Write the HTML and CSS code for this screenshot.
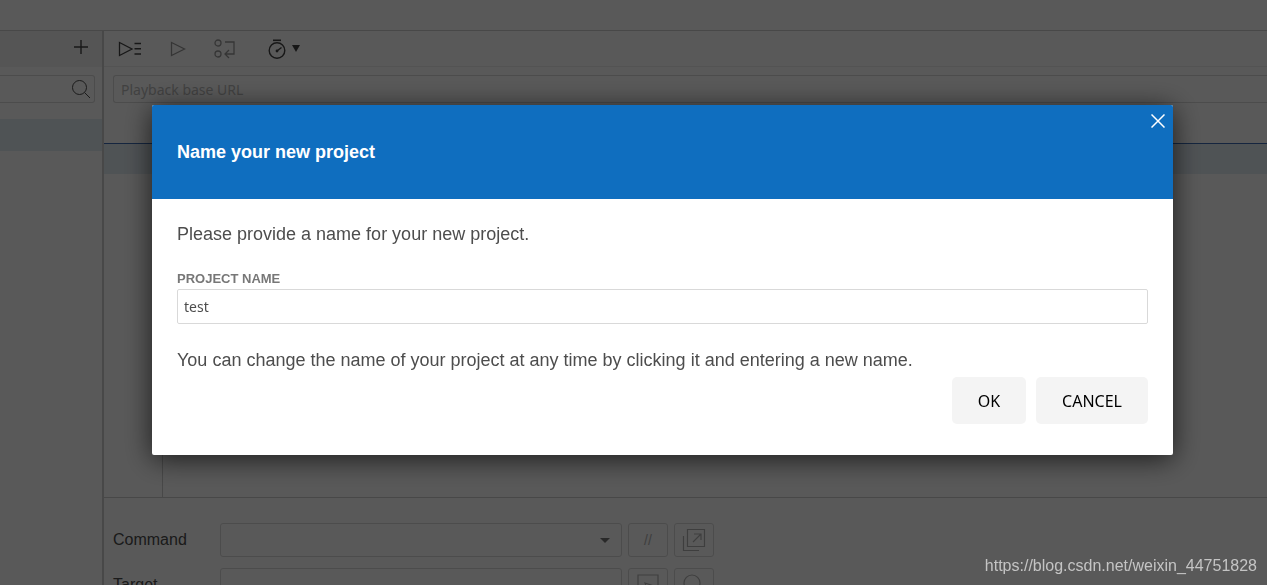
FILE: index.html
```html
<!DOCTYPE html>
<html lang="en">
<head>
<meta charset="utf-8">
<title>Name your new project</title>
<link rel="stylesheet" href="styles.css">
</head>
<body>
<div class="app">
  <header class="app-header"></header>
  <div class="app-body">
    <aside class="sidebar">
      <div class="sidebar-tools">
        <button class="icon-button" aria-label="Add test">
          <svg width="14" height="14" viewBox="0 0 14 14"><path stroke-width="1.4" d="M7 0V14M0 7H14"/></svg>
        </button>
      </div>
      <div class="search">
        <input class="search-input" type="text" aria-label="Search tests">
        <svg class="search-icon" width="20" height="20" viewBox="0 0 20 20"><circle cx="8.5" cy="8.5" r="7"/><path d="M13.5 13.5L19 19"/></svg>
      </div>
      <div class="test-item"></div>
    </aside>
    <main class="editor">
      <div class="toolbar">
        <button class="icon-button" aria-label="Run all tests">
          <svg width="24" height="16" viewBox="0 0 24 16"><path stroke-width="1.3" d="M1.5 1.5V14.5L14 8Z"/><path stroke-width="1.5" d="M16.5 2.5H23M16.5 7.8H23M16.5 13H23"/></svg>
        </button>
        <button class="icon-button faded" aria-label="Run current test">
          <svg width="16" height="16" viewBox="0 0 16 16"><path stroke-width="1.3" d="M1.5 1.5V14.5L14.5 8Z"/></svg>
        </button>
        <button class="icon-button faded" aria-label="Step over">
          <svg width="22" height="20" viewBox="0 0 22 20"><g stroke-width="1.3"><circle cx="4" cy="4" r="3"/><circle cx="4" cy="15" r="3"/><path d="M11 3H20V15H11M15 11L11 15L15 19"/></g></svg>
        </button>
        <button class="icon-button speed" aria-label="Test execution speed">
          <svg width="18" height="20" viewBox="0 0 18 20"><circle stroke-width="1.4" cx="9" cy="11.5" r="7.8"/><path stroke-width="1.5" d="M9 12L13.5 8.5"/><circle class="solid" cx="9" cy="12" r="1.4"/><path stroke-width="1.6" d="M5 1.3H13"/></svg>
          <svg width="8" height="8" viewBox="0 0 8 8"><path class="solid" d="M0 0H8L4 7Z"/></svg>
        </button>
      </div>
      <div class="url-bar"><input class="url-input" type="text" placeholder="Playback base URL" aria-label="Playback base URL"></div>
      <section class="commands">
        <div class="commands-head"></div>
        <div class="command-row"></div>
        <div class="command-gutter"></div>
      </section>
      <form class="command-form">
        <div class="form-row">
          <label for="command">Command</label>
          <div class="select-wrap">
            <select id="command" class="field"><option></option></select>
            <svg class="select-arrow" width="10" height="6" viewBox="0 0 10 6"><path class="solid" d="M0 0H10L5 5Z"/></svg>
          </div>
          <button type="button" class="square-button" aria-label="Disable command">//</button>
          <button type="button" class="square-button" aria-label="Open in new window">
            <svg width="24" height="24" viewBox="0 0 24 24"><path stroke-width="1.2" d="M5.5 1.5H22.5V18.5H5.5ZM1.5 8V22.5H17M11 14L18.5 6.5M12 6H19V12"/></svg>
          </button>
        </div>
        <div class="form-row">
          <label for="target">Target</label>
          <input id="target" class="field" type="text">
          <button type="button" class="square-button" aria-label="Select target in page">
            <svg width="24" height="24" viewBox="0 0 24 24"><path stroke-width="1.2" d="M2 18V2H22V18M9 10L18 13L14 15L12 19Z"/></svg>
          </button>
          <button type="button" class="square-button" aria-label="Find target in page">
            <svg width="24" height="24" viewBox="0 0 24 24"><circle stroke-width="1.2" cx="10" cy="10" r="8"/><path d="M16 16L22 22"/></svg>
          </button>
        </div>
      </form>
    </main>
  </div>
</div>
<div class="overlay">
  <div class="dialog" role="dialog" aria-labelledby="dialog-title">
    <div class="dialog-header">
      <h1 id="dialog-title" class="dialog-title">Name your new project</h1>
      <button class="close-button" aria-label="Close">
        <svg width="14" height="14" viewBox="0 0 14 14"><path stroke-width="1.5" d="M0.5 0.5L13.5 13.5M13.5 0.5L0.5 13.5"/></svg>
      </button>
    </div>
    <form class="dialog-body">
      <p class="dialog-text">Please provide a name for your new project.</p>
      <label class="name-label" for="project-name">PROJECT NAME</label>
      <input class="name-input" id="project-name" type="text" value="test">
      <p class="dialog-text">You can change the name of your project at any time by clicking it and entering a new name.</p>
      <div class="dialog-actions">
        <button type="button" class="action-button">OK</button>
        <button type="button" class="action-button">CANCEL</button>
      </div>
    </form>
  </div>
</div>
<div class="watermark">https://blog.csdn.net/weixin_44751828</div>
</body>
</html>
```
FILE: styles.css
```css
* { box-sizing: border-box; }

body {
  margin: 0;
  color: #4d4d4d;
  font-family: "Liberation Sans", Arial, sans-serif;
}

button, input, select { font: inherit; color: inherit; }
button { padding: 0; border: 0; background: none; }
p, h1 { margin: 0; }

svg { display: block; fill: none; stroke: currentColor; }
.solid { fill: currentColor; stroke: none; }

.app {
  display: flex;
  flex-direction: column;
  height: 100vh;
  overflow: hidden;
  background: #fff;
}
.app-header { flex: none; height: 31px; border-bottom: 1px solid #cecece; }
.app-body { flex: 1; display: flex; min-height: 0; }

.sidebar { flex: none; width: 104px; border-right: 2px solid #cecece; }
.sidebar-tools {
  display: flex;
  align-items: center;
  justify-content: flex-end;
  height: 36px;
  padding: 0 14px 4px 0;
  background: #f3f3f3;
}
.icon-button { color: #444; }
.faded { color: #999; }
.search { position: relative; padding: 8px 7px 0 0; }
.search-input {
  display: block;
  width: 100%;
  height: 28px;
  border: 1px solid #d9d9d9;
  border-left: 0;
  border-radius: 0 3px 3px 0;
}
.search-icon { position: absolute; right: 11px; top: 12px; }
.test-item { height: 32px; margin-top: 16px; background: #e3edf4; }

.editor { flex: 1; display: flex; flex-direction: column; min-width: 0; }
.toolbar {
  flex: none;
  display: flex;
  align-items: center;
  gap: 28px;
  height: 36px;
  padding-left: 14px;
  border-bottom: 1px solid #eee;
}
.speed { display: flex; align-items: center; gap: 6px; margin-left: 4px; }
.url-bar { flex: none; padding: 8px 0 0 9px; }
.url-input {
  display: block;
  width: 100%;
  height: 28px;
  padding: 0 7px;
  border: 1px solid #d9d9d9;
  border-right: 0;
  border-radius: 3px 0 0 3px;
  font-family: "Noto Sans", sans-serif;
  font-size: 14px;
}
.url-input::placeholder { color: #bbb; opacity: 1; }

.commands { flex: 1; display: flex; flex-direction: column; min-height: 0; }
.commands-head { height: 41px; border-bottom: 1px solid #3c6cb4; }
.command-row { height: 30px; background: #e3edf4; }
.command-gutter { flex: 1; width: 59px; border-right: 1px solid #cecece; }

.command-form {
  flex: none;
  display: flex;
  flex-direction: column;
  gap: 11px;
  height: 88px;
  padding: 25px 0 0 9px;
  border-top: 1px solid #cecece;
  overflow: hidden;
}
.form-row { display: flex; align-items: center; gap: 6px; }
.form-row label { width: 101px; font-size: 16px; }
.select-wrap { position: relative; width: 402px; }
.field {
  display: block;
  width: 402px;
  height: 34px;
  border: 1px solid #d9d9d9;
  border-radius: 3px;
  background: #fff;
  appearance: none;
}
.select-arrow { position: absolute; right: 12px; top: 15px; color: #777; }
.square-button {
  display: grid;
  place-items: center;
  width: 40px;
  height: 34px;
  border: 1px solid #d9d9d9;
  border-radius: 3px;
  color: #b3b3b3;
  font-size: 14px;
}

.overlay {
  position: fixed;
  inset: 0;
  padding: 105px 94px 0 152px;
  background: rgba(0, 0, 0, 0.65);
}
.dialog {
  border-radius: 2px;
  overflow: hidden;
  background: #fff;
  box-shadow: 0 4px 28px rgba(0, 0, 0, 0.7);
}
.dialog-header {
  position: relative;
  display: flex;
  align-items: center;
  height: 94px;
  padding: 0 25px;
  background: #0f6ebf;
  color: #fff;
}
.dialog-title { font-size: 18px; line-height: 20px; }
.close-button { position: absolute; top: 9px; right: 8px; }
.dialog-body { display: flex; flex-direction: column; padding: 24px 25px 31px; }
.dialog-text { font-size: 18px; line-height: 22px; }
.name-label {
  margin-top: 24px;
  color: #777;
  font-size: 13px;
  font-weight: bold;
  line-height: 20px;
}
.name-input {
  height: 35px;
  margin-bottom: 25px;
  padding: 0 6px;
  border: 1px solid #d9d9d9;
  border-radius: 2px;
  font-family: "Noto Sans", sans-serif;
  font-size: 14px;
}
.dialog-actions { display: flex; justify-content: flex-end; gap: 10px; margin-top: 6px; }
.action-button {
  height: 47px;
  padding: 0 26px;
  border-radius: 5px;
  background: #f4f4f4;
  color: #000;
  font-family: "Noto Sans", sans-serif;
  font-size: 16px;
}

.watermark {
  position: fixed;
  right: 10px;
  bottom: 9px;
  color: #c4c4c4;
  font-size: 16px;
  line-height: 20px;
}
```
